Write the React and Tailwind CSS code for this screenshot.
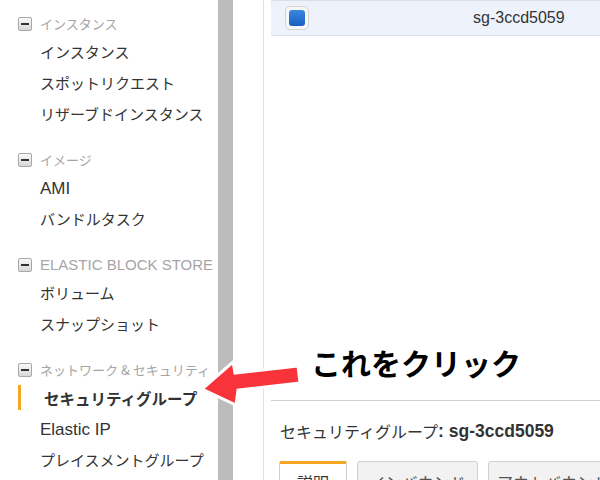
import React from "react";

const jp = { fontFamily: '"Noto Sans CJK JP", "Noto Sans", sans-serif' };
const lat = { fontFamily: '"Liberation Sans", Arial, "Noto Sans CJK JP", sans-serif' };

function Minus() {
  return (
    <span className="w-[14px] h-[14px] rounded-[2px] border border-[#a8a8a8] bg-gradient-to-b from-[#fafafa] to-[#d8d8d8] flex items-center justify-center mr-[8px] shrink-0">
      <span className="w-[8px] h-[2px] bg-[#333]" />
    </span>
  );
}

function Section({ title, titleLatin, items, first }) {
  return (
    <div className={first ? "" : "mt-[17px]"}>
      <div className="h-[26px] flex items-center pl-[18px]">
        <Minus />
        <span
          className={titleLatin ? "text-[15px] text-[#a5a5a5] whitespace-nowrap" : "text-[13px] text-[#a5a5a5] whitespace-nowrap"}
          style={titleLatin ? lat : jp}
        >
          {title}
        </span>
      </div>
      {items.map((it) => (
        <div key={it.label} className="h-[31px] flex items-center relative">
          {it.active && <span className="absolute left-[18px] top-[2px] w-[3px] h-[25px] bg-[#f5a623]" />}
          <span
            className={
              it.active
                ? "pl-[44px] text-[15.5px] font-bold text-[#333] whitespace-nowrap"
                : it.latin
                ? "pl-[40px] text-[17px] text-[#333] whitespace-nowrap"
                : "pl-[40px] text-[15px] text-[#333] whitespace-nowrap"
            }
            style={it.latin ? lat : jp}
          >
            {it.label}
          </span>
        </div>
      ))}
    </div>
  );
}

export default function App() {
  return (
    <div className="w-[600px] h-[480px] overflow-hidden relative bg-white flex">
      {/* Sidebar */}
      <div className="w-[218px] shrink-0 pt-[11px] bg-white">
        <Section
          first
          title="インスタンス"
          items={[
            { label: "インスタンス" },
            { label: "スポットリクエスト" },
            { label: "リザーブドインスタンス" },
          ]}
        />
        <Section
          title="イメージ"
          items={[{ label: "AMI", latin: true }, { label: "バンドルタスク" }]}
        />
        <Section
          title="ELASTIC BLOCK STORE"
          titleLatin
          items={[{ label: "ボリューム" }, { label: "スナップショット" }]}
        />
        <Section
          title="ネットワーク & セキュリティ"
          items={[
            { label: "セキュリティグループ", active: true },
            { label: "Elastic IP", latin: true },
            { label: "プレイスメントグループ" },
          ]}
        />
      </div>
      {/* Splitter */}
      <div className="w-[15px] shrink-0 bg-[#bcbcbc]" />
      <div className="w-[30px] shrink-0 bg-white" />
      {/* Main panel */}
      <div className="flex-1 border-l border-[#e3e3e3] pl-[7px] flex flex-col">
        <div className="h-[36px] bg-[#eef3fb] border-t border-b border-[#d9dfe8] flex items-center">
          <div className="ml-[14px] w-[24px] h-[24px] rounded-[5px] border border-[#d3d3d3] bg-[#f7f7f7] flex items-center justify-center">
            <div className="w-[16px] h-[16px] rounded-[3px] bg-gradient-to-b from-[#3a88e0] to-[#1a5fbf]" />
          </div>
          <span className="ml-[164px] text-[16px] text-[#333]" style={lat}>
            sg-3ccd5059
          </span>
        </div>
        <div className="flex-1" />
        <div className="h-[80px] border-t border-[#cfcfcf] flex flex-col">
          <div className="h-[60px] shrink-0 flex items-center pl-[9px] text-[#333]">
            <span className="text-[16px]" style={jp}>セキュリティグループ</span>
            <span className="text-[17.5px] font-bold" style={lat}>
              : sg-3ccd5059
            </span>
          </div>
          <div className="flex pl-[8px] gap-[10px]">
            <div className="w-[68px] h-[30px] shrink-0 border border-[#cfcfcf] border-t-[3px] border-t-[#f5a623] bg-white rounded-t-[2px] flex justify-center pt-[6px] text-[16px] text-[#333]" style={jp}>
              説明
            </div>
            <div className="w-[121px] h-[30px] shrink-0 border border-[#cfcfcf] bg-[#f2f2f2] rounded-t-[3px] flex justify-center pt-[8px] text-[16px] text-[#555]" style={jp}>
              インバウンド
            </div>
            <div className="w-[130px] h-[30px] shrink-0 border border-[#cfcfcf] bg-[#f2f2f2] rounded-t-[3px] flex justify-center pt-[8px] text-[16px] text-[#555] whitespace-nowrap" style={jp}>
              アウトバウンド
            </div>
          </div>
        </div>
      </div>

      {/* Annotation arrow */}
      <svg className="absolute left-0 top-0" width="600" height="480" viewBox="0 0 600 480">
        <polygon
          points="202,389 233,362 235,373 298,366 300,383 238,390 236,405"
          fill="#f8333a"
          stroke="#ffffff"
          strokeWidth="3"
          strokeLinejoin="miter"
        />
      </svg>
      <div
        className="absolute left-[311px] top-[347px] text-[30px] font-bold text-black leading-none whitespace-nowrap"
        style={jp}
      >
        これをクリック
      </div>
    </div>
  );
}
